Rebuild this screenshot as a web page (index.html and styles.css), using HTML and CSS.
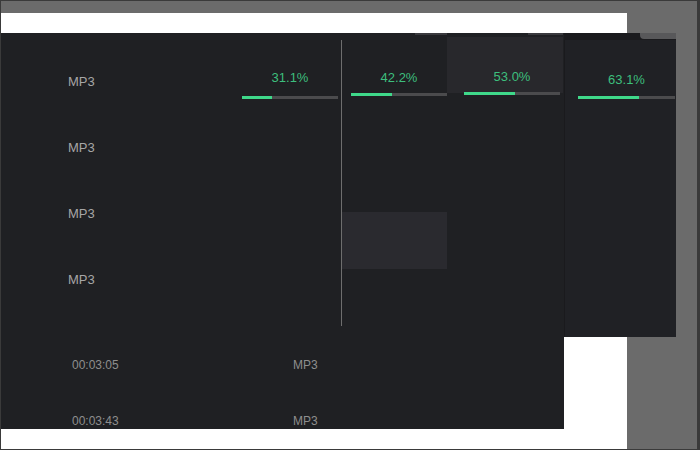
FILE: index.html
```html
<!DOCTYPE html>
<html lang="en">
<head>
    <meta charset="UTF-8">
    <title>Converter Queue</title>
    <link rel="stylesheet" href="styles.css">
</head>
<body>
    <div class="frame">
        <div class="sheet">
            <div class="panels">
                <!-- Main list -->
                <section class="list">
                    <div class="list-top">
                        <div class="col-name">
                            <div class="row">
                                <span class="fmt">MP3</span>
                                <div class="prog prog-a">
                                    <span class="pct">31.1%</span>
                                    <div class="track"><div class="fill" style="width: 31.1%"></div></div>
                                </div>
                            </div>
                            <div class="row"><span class="fmt">MP3</span></div>
                            <div class="row"><span class="fmt">MP3</span></div>
                            <div class="row"><span class="fmt">MP3</span></div>
                        </div>

                        <div class="divider"></div>

                        <div class="col-b">
                            <div class="tab-edge"></div>
                            <div class="prog prog-b">
                                <span class="pct">42.2%</span>
                                <div class="track"><div class="fill" style="width: 42.2%"></div></div>
                            </div>
                            <div class="hover-cell"></div>
                        </div>

                        <div class="col-c">
                            <div class="tab-edge"></div>
                            <div class="col-c-head">
                                <span class="pct">53.0%</span>
                            </div>
                            <div class="track track-c"><div class="fill" style="width: 53%"></div></div>
                        </div>
                    </div>

                    <div class="tracks">
                        <div class="track-row">
                            <span class="time">00:03:05</span>
                            <span class="kind">MP3</span>
                        </div>
                        <div class="track-row">
                            <span class="time">00:03:43</span>
                            <span class="kind">MP3</span>
                        </div>
                    </div>
                </section>

                <!-- Side column -->
                <aside class="side">
                    <div class="side-top"><span class="notch"></span></div>
                    <div class="prog prog-d">
                        <span class="pct">63.1%</span>
                        <div class="track"><div class="fill" style="width: 63.1%"></div></div>
                    </div>
                </aside>
            </div>
        </div>
    </div>
</body>
</html>
```

FILE: styles.css
```css
html, body {
    margin: 0;
    padding: 0;
}

body {
    font-family: "Liberation Sans", Arial, sans-serif;
    background-color: #6b6b6b;
}

.frame {
    width: 700px;
    height: 450px;
    box-sizing: border-box;
    border: 1px solid #3a3a3a;
    border-right-width: 3px;
    padding-top: 12px;
    overflow: hidden;
}

.sheet {
    width: 626px;
    height: 436px;
    background-color: #fff;
    padding-top: 20px;
    box-sizing: border-box;
}

.panels {
    display: flex;
    align-items: flex-start;
}

/* main dark list */
.list {
    width: 563px;
    height: 396px;
    flex-shrink: 0;
    background-color: #1f2023;
    overflow: hidden;
}

.list-top {
    display: flex;
    height: 297px;
}

.col-name {
    width: 340px;
    padding-top: 15px;
}

.row {
    height: 66px;
    display: flex;
    align-items: center;
    position: relative;
}

.fmt {
    margin-left: 67px;
    font-size: 13px;
    color: #a6a6a6;
}

.divider {
    width: 1px;
    margin-top: 7px;
    height: 286px;
    background-color: #6e6e6e;
}

.col-b {
    width: 105px;
}

.col-c {
    width: 116px;
}

.tab-edge {
    height: 2px;
    width: 32px;
    margin-left: auto;
    background-color: #3a3a3e;
}

.col-c .tab-edge {
    width: 35px;
}

/* progress cell */
.prog {
    display: flex;
    flex-direction: column;
    align-items: center;
    width: 96px;
}

.pct {
    font-size: 13px;
    line-height: 15px;
    color: #3dbf7d;
}

.track {
    width: 100%;
    height: 3px;
    background-color: #4b4b4d;
}

.fill {
    height: 100%;
    background-color: #3fd98a;
}

.prog-a {
    position: absolute;
    right: 3px;
    top: 22px;
    gap: 11px;
}

.prog-b {
    margin-left: 9px;
    margin-top: 35px;
    gap: 8px;
}

.hover-cell {
    height: 57px;
    margin-top: 116px;
    background-color: #2a2a2f;
}

.col-c-head {
    margin-top: 2px;
    height: 56px;
    padding-top: 32px;
    box-sizing: border-box;
    background-color: #28282c;
    text-align: center;
    padding-left: 17px;
}

.col-c-head .pct {
    display: block;
    width: 96px;
}

.track-c {
    width: 96px;
    margin-left: 17px;
    margin-top: -1px;
}

/* lower rows */
.tracks {
    display: flex;
    flex-direction: column;
}

.track-row {
    display: flex;
    align-items: center;
    height: 56px;
}

.track-row:first-child {
    margin-top: 7px;
}

.time {
    margin-left: 71px;
    width: 221px;
    font-size: 12px;
    color: #8e8e8e;
}

.kind {
    font-size: 12px;
    color: #8e8e8e;
}

/* side column */
.side {
    width: 112px;
    height: 304px;
    flex-shrink: 0;
    background-color: #202125;
    border-left: 1px solid #1a1a1d;
    box-sizing: border-box;
}

.side-top {
    height: 7px;
    background-color: #1a1a1d;
    display: flex;
    justify-content: flex-end;
}

.notch {
    width: 36px;
    height: 6px;
    background-color: #58585a;
    border-bottom-left-radius: 4px;
}

.prog-d {
    width: 97px;
    margin-left: 13px;
    margin-top: 32px;
    gap: 9px;
}
```
